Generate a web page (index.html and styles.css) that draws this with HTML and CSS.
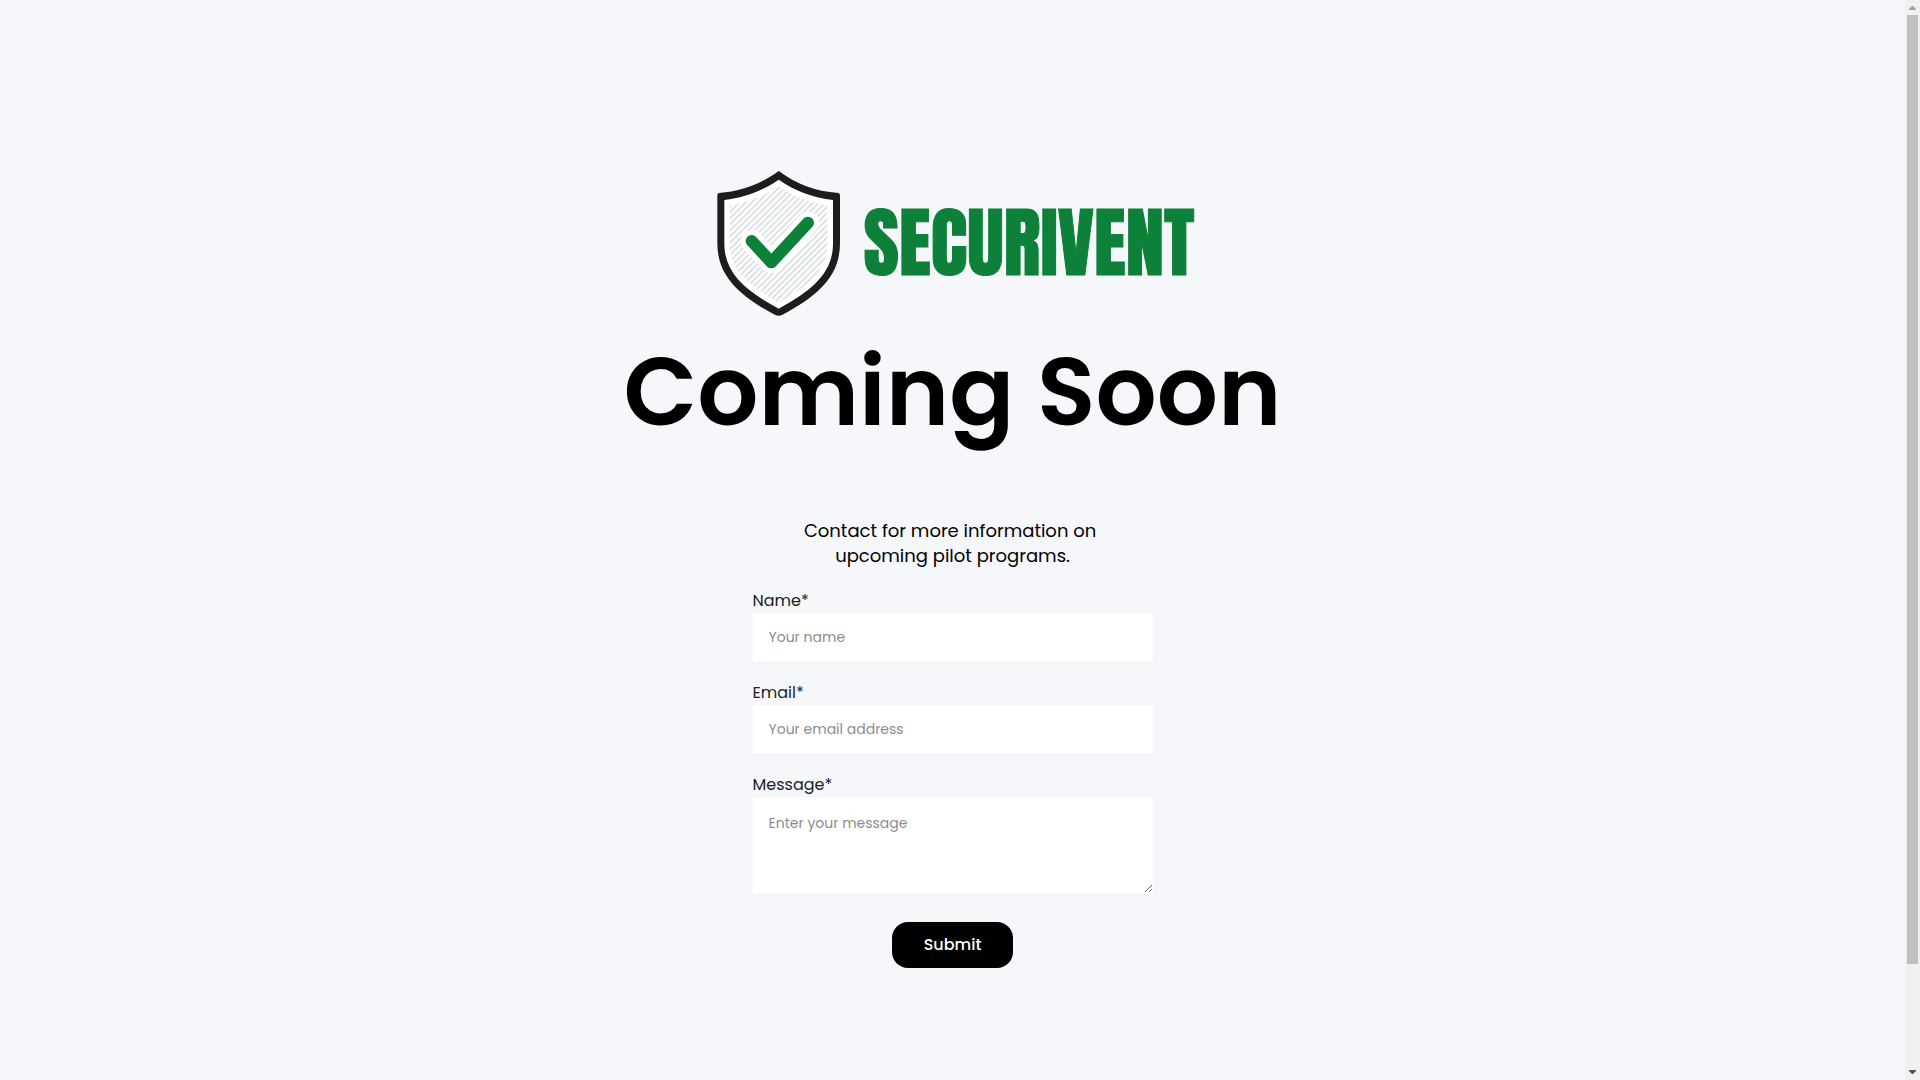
FILE: index.html
```html
<!DOCTYPE html>
<html lang="en">

<head>
  <meta charset="UTF-8">
  <meta name="viewport" content="width=device-width, initial-scale=1.0">
  <title>Securivent - Coming Soon</title>
  <link rel="stylesheet" href="styles.css">
</head>

<body>
  <main class="page">
    <div class="logo">
      <svg class="shield" viewBox="48 33 369 435" aria-hidden="true">
        <defs>
          <pattern id="stripes" width="13" height="13" patternUnits="userSpaceOnUse" patternTransform="rotate(45)">
            <rect width="6" height="13" fill="#dce2df" />
          </pattern>
        </defs>
        <path d="M233 33C286 72 342 94 412 99Q417 100 417 106V250C417 345 356 405 243 465Q233 470 223 465C110 405 49 345 49 250V106Q49 100 54 99C124 94 180 72 233 33Z" fill="#1c1e1d" />
        <path d="M233 59C283 93 335 113 396 120V250C396 335 340 388 233 446C126 388 70 335 70 250V120C131 113 183 93 233 59Z" fill="#fff" />
        <path d="M233 79C278 110 326 128 379 136V250C379 326 330 374 233 428C136 374 86 326 86 250V136C140 128 188 110 233 79Z" fill="url(#stripes)" />
        <path d="M152 243L211 307L321 188" class="tick-outline" />
        <path d="M152 243L211 307L321 188" class="tick" />
      </svg>
      <span class="brand">SECURIVENT</span>
    </div>

    <h1>Coming Soon</h1>

    <form class="contact">
      <p class="intro">Contact for more information on&nbsp;<br>upcoming pilot programs.</p>

      <label for="name">Name*</label>
      <input type="text" id="name" name="name" placeholder="Your name" required>

      <label for="email">Email*</label>
      <input type="email" id="email" name="email" placeholder="Your email address" required>

      <label for="message">Message*</label>
      <textarea id="message" name="message" placeholder="Enter your message" required></textarea>

      <button type="submit" class="btn">Submit</button>
    </form>
  </main>

  <div class="scrollbar" aria-hidden="true">
    <svg class="arrow arrow-up" viewBox="0 0 7 4"><path d="M3 0H4L7 3V4H0V3Z" /></svg>
    <div class="track">
      <div class="thumb"></div>
    </div>
    <svg class="arrow" viewBox="0 0 7 4"><path d="M0 0H7V1L4 4H3L0 1Z" /></svg>
  </div>
</body>

</html>
```
FILE: styles.css
```css
* {
  box-sizing: border-box;
}
html {
  scrollbar-width: none;
}
body {
  margin: 0;
  padding-right: 15px;
  font-family: Poppins, Inter, sans-serif;
  background-color: #f5f7fb;
  color: #000;
}
.page {
  display: flex;
  flex-direction: column;
  align-items: center;
  padding: 171px 20px 229px;
}
.logo {
  display: flex;
  align-items: center;
  gap: 24px;
  padding-left: 6px;
}
.shield {
  width: 123px;
  height: 145px;
}
.tick,
.tick-outline {
  fill: none;
  stroke: #0d8039;
  stroke-width: 36px;
  stroke-linecap: round;
  stroke-linejoin: round;
}
.tick-outline {
  stroke: #fff;
  stroke-width: 66px;
}
.brand {
  padding-bottom: 4px;
  font-family: Anton, "Liberation Sans Narrow", sans-serif;
  font-size: 77px;
  font-weight: 400;
  line-height: 80px;
  color: #0d8039;
  -webkit-text-stroke: 1px #0d8039;
}
h1 {
  margin: 11px 0 61px;
  font-size: 96px;
  font-weight: 600;
  line-height: 130px;
}
.contact {
  display: flex;
  flex-direction: column;
  width: 100%;
  max-width: 400px;
}
.intro {
  margin: 0 0 21px;
  font-size: 18px;
  line-height: 25px;
  text-align: center;
}
label {
  font-size: 16px;
  line-height: 24px;
  color: #1c1e1d;
}
input,
textarea {
  width: 100%;
  height: 48px;
  margin-bottom: 20px;
  padding: 12px 16px;
  border: none;
  border-radius: 0;
  background-color: #fff;
  font-family: inherit;
  font-size: 14px;
  line-height: 24px;
}
textarea {
  height: 96px;
  margin-bottom: 29px;
  padding-top: 14px;
  resize: vertical;
}
input::placeholder,
textarea::placeholder {
  color: #8c8c8c;
}
.btn {
  align-self: center;
  padding: 11px 32px;
  border: none;
  border-radius: 16px;
  background-color: #000;
  color: #fff;
  font-family: inherit;
  font-size: 16px;
  font-weight: 500;
  line-height: 24px;
  cursor: pointer;
}
.btn:hover {
  background-color: #222;
}
.scrollbar {
  position: fixed;
  top: 0;
  right: 0;
  bottom: 0;
  display: flex;
  flex-direction: column;
  align-items: center;
  width: 15px;
  padding: 6px 0;
  background-color: #f0f0f0;
}
.track {
  flex: 1;
  width: 11px;
  margin: 5px 0;
}
.thumb {
  height: 90.4%;
  background-color: #bfbfbf;
}
.arrow {
  width: 7px;
  height: 4px;
  fill: #505050;
}
.arrow-up {
  fill: #a3a3a3;
}
```
